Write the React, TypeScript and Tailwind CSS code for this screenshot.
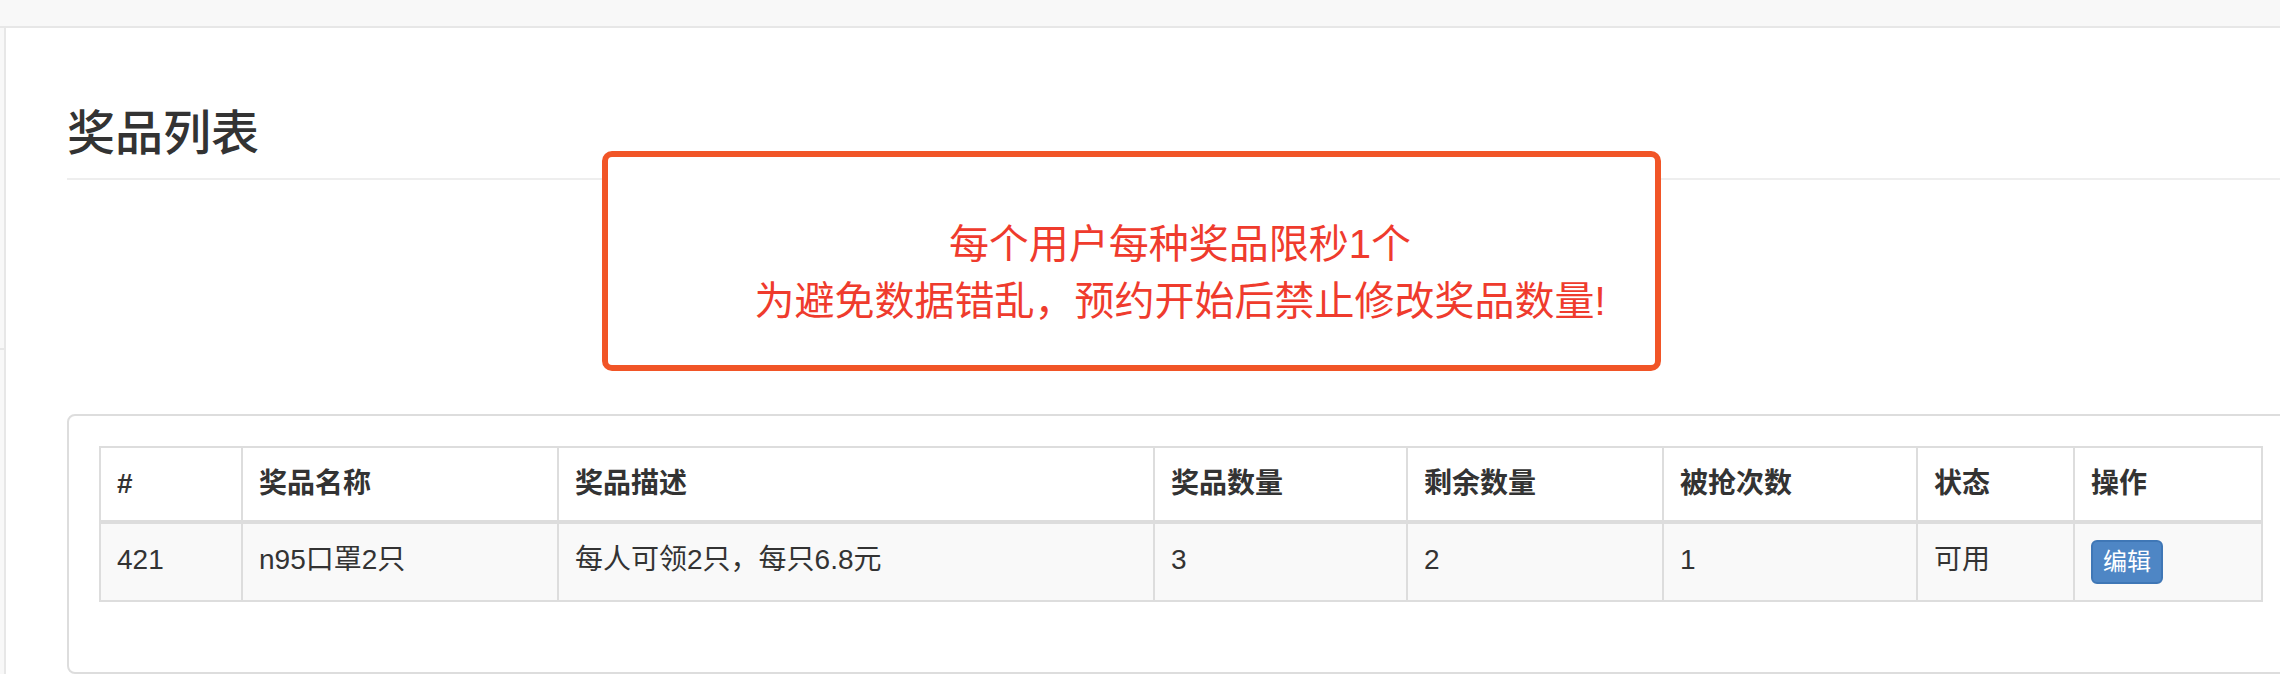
import React from 'react';

type Prize = {
  id: number;
  name: string;
  desc: string;
  total: number;
  left: number;
  grabbed: number;
  status: string;
};

const prizes: Prize[] = [
  { id: 421, name: 'n95口罩2只', desc: '每人可领2只，每只6.8元', total: 3, left: 2, grabbed: 1, status: '可用' },
];

const columns = [
  { title: '#', width: 'w-[142px]' },
  { title: '奖品名称', width: 'w-[316px]' },
  { title: '奖品描述', width: 'w-[596px]' },
  { title: '奖品数量', width: 'w-[253px]' },
  { title: '剩余数量', width: 'w-[256px]' },
  { title: '被抢次数', width: 'w-[254px]' },
  { title: '状态', width: 'w-[157px]' },
  { title: '操作', width: 'w-[188px]' },
];

const font = "font-['Liberation_Sans','Noto_Sans_CJK_SC',sans-serif]";

const App: React.FC = () => {
  const td = 'border-2 border-[#ddd] p-4 align-top leading-[40px]';

  return (
    <div className={`w-[2280px] h-[674px] overflow-hidden bg-white text-[#333] ${font}`}>
      {/* navbar */}
      <div className="h-[28px] bg-[#f8f8f8] border-b-2 border-[#e7e7e7]" />

      <div className="flex">
        {/* sidebar edge */}
        <div className="w-[6px] shrink-0 h-[646px] bg-[#f8f8f8] border-r-2 border-[#e7e7e7]">
          <div className="h-[322px] border-b-2 border-[#e7e7e7]" />
        </div>

        <main className="pl-[61px] shrink-0">
          <div className="w-[2226px]">
            <div className="mt-[79px] pb-[18px] border-b-2 border-[#eee]">
              <h3 className="text-[48px] leading-[53px] font-medium">奖品列表</h3>
            </div>

            {/* notice */}
            <div className="relative mt-[36px] mb-[84px]">
              <div className="absolute -top-[65px] left-[535px] w-[1059px] h-[220px] bg-white border-[6px] border-[#f15527] rounded-[10px]" />
              <div className="relative text-center text-[40px] leading-[57px] text-[#ef3b2d]">
                <p>每个用户每种奖品限秒1个</p>
                <p>为避免数据错乱，预约开始后禁止修改奖品数量!</p>
              </div>
            </div>

            {/* panel */}
            <div className="border-2 border-[#ddd] rounded-[8px] p-[30px]">
              <table className="table-fixed w-[2162px] border-collapse border-2 border-[#ddd] text-[28px] mb-[40px]">
                <thead>
                  <tr>
                    {columns.map((c) => (
                      <th
                        key={c.title}
                        className={`${c.width} border-2 border-b-4 border-[#ddd] p-4 text-left align-bottom font-bold leading-[40px]`}
                      >
                        {c.title}
                      </th>
                    ))}
                  </tr>
                </thead>
                <tbody>
                  {prizes.map((p) => (
                    <tr key={p.id} className="bg-[#f9f9f9]">
                      <td className={td}>{p.id}</td>
                      <td className={td}>{p.name}</td>
                      <td className={td}>{p.desc}</td>
                      <td className={td}>{p.total}</td>
                      <td className={td}>{p.left}</td>
                      <td className={td}>{p.grabbed}</td>
                      <td className={td}>{p.status}</td>
                      <td className={td}>
                        <button className="px-[10px] py-[2px] text-[24px] leading-[36px] text-white bg-[#4e86c5] border-2 border-[#3f77b6] rounded-[6px]">
                          编辑
                        </button>
                      </td>
                    </tr>
                  ))}
                </tbody>
              </table>
            </div>
          </div>
        </main>
      </div>
    </div>
  );
};

export default App;
